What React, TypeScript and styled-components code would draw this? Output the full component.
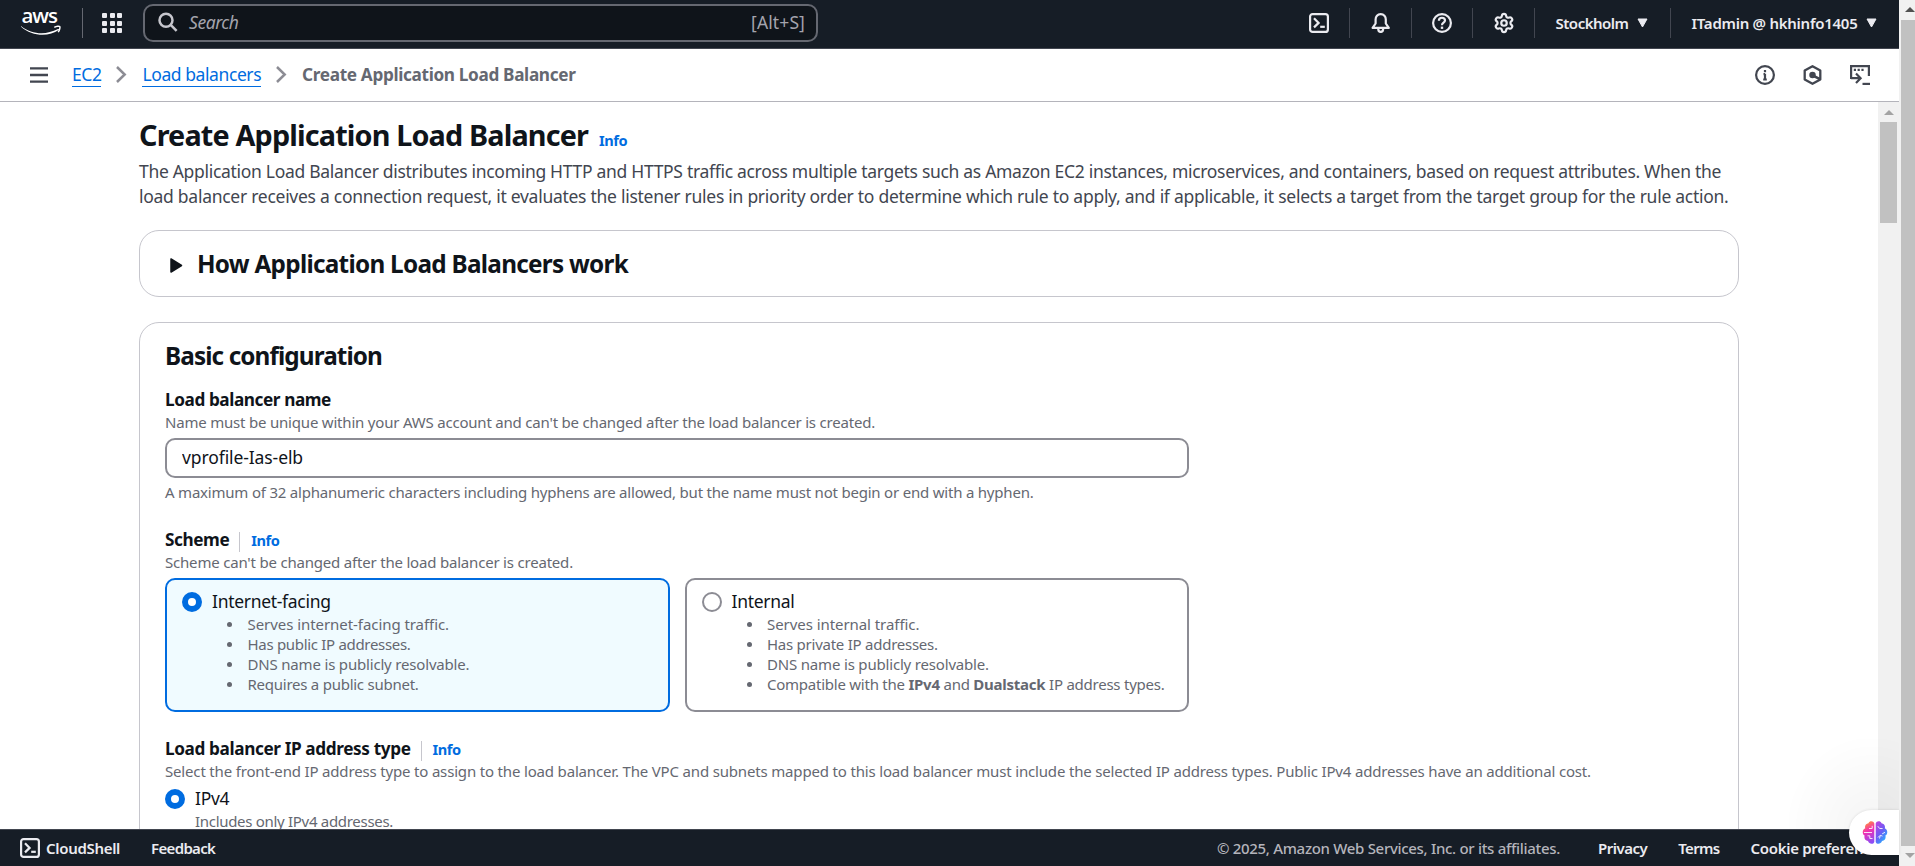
import React from "react";
import styled, { createGlobalStyle, css } from "styled-components";
import { Settings } from "lucide-react";

const GlobalStyle = createGlobalStyle`
  * { box-sizing: border-box; }
  body {
    margin: 0;
    overflow: hidden;
    background: #fff;
    color: #0f141a;
    font-family: "Noto Sans", "Open Sans", sans-serif;
  }
`;

const Page = styled.div`
  display: flex;
  width: 100vw;
  height: 100vh;
  min-height: 0;
`;

const Console = styled.div`
  display: flex;
  flex: 1;
  flex-direction: column;
  min-width: 0;
`;

/* ---------- top navigation ---------- */

const TopBar = styled.header`
  display: flex;
  flex: none;
  height: 49px;
  background: #161d26;
  border-bottom: 1px solid #424650;
  color: #ebebf0;
  padding-left: 21px;
`;

const LogoLink = styled.div`
  width: 61px;
  height: 40px;
  padding-top: 5px;
`;

const BarDivider = styled.div`
  width: 1px;
  height: 30px;
  margin-top: 8px;
  background: #656871;
`;

const Apps = styled.div`
  display: grid;
  grid-template-columns: repeat(3, 5px);
  grid-auto-rows: 5px;
  gap: 2.5px;
  margin: 13px 21px 0 19px;
`;

const AppDot = styled.i`
  border-radius: 1px;
  background: #ebebf0;
`;

const SearchBox = styled.div`
  display: flex;
  align-items: center;
  width: 675px;
  height: 38px;
  margin-top: 4px;
  padding: 0 11px 2px 13px;
  border: 2px solid #656871;
  border-radius: 10px;
  background: #0f141a;
  color: #a4a4ad;
  font-size: 17.5px;
`;

const SearchHint = styled.span`
  flex: 1;
  margin-left: 11px;
  font-style: italic;
  letter-spacing: -0.45px;
`;

const Shortcut = styled.span`
  letter-spacing: 0.12px;
`;

const Utilities = styled.nav`
  display: flex;
  margin-left: auto;
`;

const Utility = styled.div<{ $width: number; $first?: boolean; $menu?: boolean }>`
  display: flex;
  align-items: center;
  justify-content: ${(p) => (p.$menu ? "flex-start" : "center")};
  gap: 8px;
  width: ${(p) => p.$width}px;
  height: 30px;
  margin-top: 8px;
  padding-left: ${(p) => (p.$menu ? 20.5 : 0)}px;
  border-left: 1px solid ${(p) => (p.$first ? "transparent" : "#424650")};
  font-size: 15px;
  font-weight: 600;
`;

const Tracked = styled.span<{ $tracking: number }>`
  letter-spacing: ${(p) => p.$tracking}px;
  white-space: nowrap;
`;

/* ---------- breadcrumbs ---------- */

const CrumbBar = styled.div`
  display: flex;
  flex: none;
  align-items: center;
  height: 53px;
  padding: 0 29px 1px 30px;
  border-bottom: 1px solid #b4b4bb;
  color: #424650;
`;

const Crumbs = styled.div`
  display: flex;
  flex: 1;
  align-items: center;
  gap: 15px;
  margin-left: 24px;
  font-size: 17.5px;
  line-height: 25px;
  white-space: nowrap;
`;

const CrumbLink = styled.a<{ $tracking: number }>`
  height: 24px;
  line-height: 24px;
  margin-top: -2px;
  box-shadow: 0 1px 0 #006ce0;
  color: #006ce0;
  letter-spacing: ${(p) => p.$tracking}px;
`;

const CurrentCrumb = styled.span`
  color: #656871;
  font-size: 17.2px;
  font-weight: 700;
  letter-spacing: -0.34px;
  margin-top: -1px;
`;

const CrumbTools = styled.div`
  display: flex;
  align-items: center;
  gap: 28px;
`;

/* ---------- scroll area ---------- */

const ScrollArea = styled.div`
  display: flex;
  flex: 1;
  min-height: 0;
  overflow: hidden;
`;

const Content = styled.main`
  flex: 1;
  min-width: 0;
  padding: 15px 139px 0;
  overflow: hidden;
`;

const InnerTrack = styled.div`
  display: flex;
  flex: none;
  flex-direction: column;
  align-items: center;
  width: 21px;
  padding-top: 8px;
  background: #f1f1f1;
`;

const InnerThumb = styled.div`
  width: 17px;
  height: 101px;
  margin-top: 7px;
  background: #c1c1c1;
`;

const OuterTrack = styled.div`
  display: flex;
  flex: none;
  flex-direction: column;
  justify-content: space-between;
  align-items: flex-end;
  width: 16px;
  padding: 7px 0 8px;
  background: #f1f1f1;
`;

const OuterThumb = styled.div`
  flex: 1;
  width: 14px;
  margin: 8px 0 7px;
  background: #c1c1c1;
`;

const ScrollArrow = styled.div<{ $down?: boolean; $color: string }>`
  width: 0;
  height: 0;
  border: solid transparent;
  border-width: 0 5px;
  ${(p) =>
    p.$down
      ? css`border-top: 5px solid ${p.$color};`
      : css`border-bottom: 5px solid ${p.$color};`}
`;

/* ---------- form ---------- */

const TitleRow = styled.div`
  display: flex;
  align-items: baseline;
  gap: 11px;
  height: 36px;
`;

const PageTitle = styled.h1`
  margin: 0;
  font-size: 28.8px;
  font-weight: 700;
  line-height: 36px;
  letter-spacing: -0.85px;
`;

const InfoLink = styled.a`
  color: #006ce0;
  font-size: 14.6px;
  font-weight: 700;
  letter-spacing: -0.45px;
`;

const Intro = styled.p`
  margin: 6px 0 21px;
  color: #424650;
  font-size: 17.5px;
  line-height: 25px;
`;

const IntroLine = styled.span<{ $tracking: number }>`
  display: block;
  letter-spacing: ${(p) => p.$tracking}px;
  white-space: nowrap;
`;

const Card = styled.section`
  border: 1px solid #c6c6cd;
  border-radius: 20px;
  background: #fff;
`;

const HelpCard = styled(Card)`
  display: flex;
  align-items: center;
  gap: 14px;
  height: 67px;
  margin-bottom: 25px;
  padding-left: 30px;
`;

const FormCard = styled(Card)`
  height: 900px;
  padding: 18px 25px;
`;

const Heading = styled.h2<{ $tracking: number }>`
  margin: 0;
  font-size: 24.3px;
  font-weight: 700;
  line-height: 30px;
  letter-spacing: ${(p) => p.$tracking}px;
`;

const Field = styled.div<{ $gap: number }>`
  margin-top: ${(p) => p.$gap}px;
`;

const LabelRow = styled.div`
  display: flex;
  align-items: center;
  height: 25px;
`;

const Label = styled.span<{ $tracking: number }>`
  font-size: 17.2px;
  font-weight: 700;
  line-height: 25px;
  letter-spacing: ${(p) => p.$tracking}px;
`;

const LabelDivider = styled.i`
  width: 1px;
  height: 20px;
  margin: 4px 11px 0 10px;
  background: #c6c6cd;
`;

const Description = styled.div<{ $tracking: number; $top?: number }>`
  margin-top: ${(p) => p.$top ?? 0}px;
  color: #656871;
  font-size: 15px;
  line-height: 20px;
  letter-spacing: ${(p) => p.$tracking}px;
  white-space: nowrap;
`;

const TextInput = styled.input`
  display: block;
  width: 1024px;
  height: 40px;
  margin: 6px 0 4px;
  padding: 0 15px 3px;
  border: 2px solid #8c8c94;
  border-radius: 10px;
  background: #fff;
  color: #0f141a;
  font: 400 17.5px "Noto Sans", sans-serif;
  letter-spacing: -0.1px;
  outline: none;
`;

const Tiles = styled.div`
  display: grid;
  grid-template-columns: repeat(2, minmax(0, 1fr));
  gap: 15px;
  width: 1024px;
  margin-top: 6px;
`;

const Tile = styled.div<{ $selected?: boolean }>`
  display: flex;
  gap: 10px;
  height: 134px;
  padding: 9px 15px;
  border: 2px solid ${(p) => (p.$selected ? "#006ce0" : "#8c8c94")};
  border-radius: 10px;
  background: ${(p) => (p.$selected ? "#f0fbff" : "#fff")};
`;

const Radio = styled.span<{ $selected?: boolean }>`
  flex: none;
  width: 20px;
  height: 20px;
  margin-top: 3px;
  border: ${(p) => (p.$selected ? "6px solid #006ce0" : "2px solid #8c8c94")};
  border-radius: 50%;
  background: #fff;
`;

const OptionLabel = styled.div`
  font-size: 17.5px;
  line-height: 25px;
  letter-spacing: -0.3px;
`;

const Bullets = styled.ul`
  display: flex;
  flex-direction: column;
  margin: 0;
  padding: 0 0 0 15px;
  list-style: none;
`;

const Bullet = styled.li<{ $tracking: number }>`
  display: flex;
  align-items: center;
  height: 20px;
  color: #656871;
  font-size: 15px;
  line-height: 20px;
  letter-spacing: ${(p) => p.$tracking}px;
  white-space: pre;

  &::before {
    content: "";
    width: 5px;
    height: 5px;
    margin-right: 15.5px;
    border-radius: 50%;
    background: #656871;
  }

  b { font-weight: 700; }
`;

const RadioRow = styled.div`
  display: flex;
  gap: 10px;
  margin-top: 5px;
`;

/* ---------- footer ---------- */

const Footer = styled.footer`
  display: flex;
  flex: none;
  align-items: center;
  height: 37px;
  padding: 0 0 0 20px;
  border-top: 1px solid #424650;
  background: #161d26;
  color: #ebebf0;
  font-size: 15px;
  font-weight: 600;
  overflow: hidden;
`;

const FooterItem = styled.span<{ $left: number; $tracking: number; $muted?: boolean }>`
  margin-left: ${(p) => p.$left}px;
  color: ${(p) => (p.$muted ? "#b4b4bb" : "inherit")};
  font-weight: ${(p) => (p.$muted ? 500 : 600)};
  letter-spacing: ${(p) => p.$tracking}px;
  white-space: nowrap;
`;

const FooterRight = styled.div`
  display: flex;
  flex: none;
  width: 682px;
  margin-left: auto;
`;

const Assistant = styled.div`
  position: fixed;
  right: 16px;
  bottom: 11px;
  display: flex;
  align-items: center;
  width: 50px;
  height: 45px;
  padding-left: 13px;
  border-radius: 23px 0 0 23px;
  background: #fff;
  box-shadow: 0 0 3px rgba(0, 0, 0, 0.12);
`;

const AssistantGlow = styled.div`
  position: fixed;
  right: 16px;
  bottom: 37px;
  width: 110px;
  height: 90px;
  background: radial-gradient(ellipse at 75% 100%, rgba(0, 0, 0, 0.045), transparent 75%);
  pointer-events: none;
`;

/* ---------- icons ---------- */

const AwsLogo = () => (
  <svg width="40" height="31" viewBox="0 0 40 31" overflow="visible">
    <text x="0.5" y="18" fill="#fff" fontFamily="Open Sans" fontSize="20.500" fontWeight="600" textLength="36.500">
      aws
    </text>
    <path d="M.3 21.2C10.500 29.300 24.500 30.600 37 24.100c.8-.4 1.300.4.7 1C28 32 11 31.800.1 21.800c-.3-.4-.1-.8.2-.6Z" fill="#fff" />
    <path d="M33.300 22.400c2.300-1.500 5-1.400 5.500-.8.4.6-.1 3.600-1.600 5.500" fill="none" stroke="#fff" strokeWidth="1.500" />
  </svg>
);

const TerminalIcon = () => (
  <svg width="20" height="20" viewBox="0 0 20 20" fill="none" stroke="currentColor" strokeWidth="2.200">
    <rect x="1.100" y="1.100" width="17.800" height="17.800" rx="2.500" />
    <path d="m5 5.300 4.600 4.600L5 14.400" />
    <path d="M11.200 13.800h4.600" />
  </svg>
);

const SearchIcon = () => (
  <svg width="20" height="20" viewBox="0 0 20 20" fill="none" stroke="#c6c6cd" strokeWidth="2.500">
    <circle cx="8" cy="8.200" r="6.500" />
    <path d="m12.700 12.900 5.900 6" />
  </svg>
);

const BellIcon = () => (
  <svg width="20" height="20" viewBox="0 0 20 20" fill="none" stroke="currentColor" strokeWidth="2.200" strokeLinejoin="round">
    <path d="M9.700 1.100c-3.200 0-5.100 2.400-5.100 5.400v4L1.600 14.900h16.200l-3-4.400v-4c0-3-1.900-5.400-5.100-5.400Z" />
    <path d="M7.200 15.500c0 4.600 5 4.600 5 0" />
  </svg>
);

const HelpIcon = () => (
  <svg width="20" height="20" viewBox="0 0 20 20" fill="none" stroke="currentColor" strokeWidth="2.200">
    <circle cx="10" cy="10" r="8.900" />
    <path d="M6.900 7.700C6.900 3.700 13 3.900 13 7.500c0 2.300-3 2.100-3 4.700" />
    <path d="M10 13.600v2.300" strokeWidth="2.400" />
  </svg>
);

const CaretDown = () => (
  <svg width="11" height="10" viewBox="0 0 11 10" fill="currentColor" stroke="currentColor" strokeLinejoin="round">
    <path d="M1 1h9L5.500 9Z" />
  </svg>
);

const CaretSvg = styled.svg`
  margin-top: 4px;
`;

const CaretRight = () => (
  <CaretSvg width="13" height="15" viewBox="0 0 13 15" fill="currentColor" stroke="currentColor" strokeWidth="1.500" strokeLinejoin="round">
    <path d="M1 1v13l10.500-6.500Z" />
  </CaretSvg>
);

const MenuIcon = () => (
  <svg width="18" height="16" viewBox="0 0 18 16" stroke="currentColor" strokeWidth="2.300">
    <path d="M0 1.300h18M0 8h18M0 14.700h18" />
  </svg>
);

const Chevron = () => (
  <svg width="11" height="17" viewBox="0 0 11 17" fill="none" stroke="#8c8c94" strokeWidth="2.500">
    <path d="m1 1 7.700 7.500L1 16" />
  </svg>
);

const InfoIcon = () => (
  <svg width="20" height="20" viewBox="0 0 20 20" fill="none" stroke="currentColor" strokeWidth="2.200">
    <circle cx="10" cy="10" r="8.900" />
    <path d="M10 8.700v6.300M10 5v2.200M8.500 9.200H10M8.200 14.500h3.600" />
  </svg>
);

const HexagonIcon = () => (
  <svg width="19" height="20" viewBox="0 0 19 20" fill="none" stroke="currentColor" strokeWidth="2.300" strokeLinejoin="round">
    <path d="M9.500 1.200 17.300 5.600v8.800l-7.800 4.400-7.800-4.400V5.600Z" />
    <circle cx="9.500" cy="10" r="2.100" fill="currentColor" />
    <path d="m10.500 10.800 6.500 3.400" strokeWidth="2.600" />
  </svg>
);

const ShellWindowIcon = () => (
  <svg width="20" height="20" viewBox="0 0 20 20" fill="none" stroke="currentColor" strokeWidth="2.200">
    <path d="M1.100 14V1.100h17.800V11" />
    <path d="M3.800 4.900h2.200M7.600 4.900h2.200M11.400 4.900h2.200" />
    <path d="M1 13.200h9M6 8.500l4.600 4.700L6 18" />
    <path d="M12.500 18.900H20" />
  </svg>
);

const BrainIcon = () => (
  <svg width="26" height="26" viewBox="0 0 26 26">
    <defs>
      <linearGradient id="brainLeft" x1="0.300" y1="0" x2="0.600" y2="1">
        <stop offset="0" stopColor="#ff9a2e" />
        <stop offset="0.420" stopColor="#f42fb0" />
        <stop offset="1" stopColor="#8b4df5" />
      </linearGradient>
      <linearGradient id="brainRight" x1="0" y1="0" x2="0.700" y2="1">
        <stop offset="0" stopColor="#c43fe0" />
        <stop offset="0.550" stopColor="#6a5cf5" />
        <stop offset="1" stopColor="#22b8ff" />
      </linearGradient>
    </defs>
    <path d="M12.300 3.500C11.500.7 7.500.6 6.500 3.300 3.800 3.500 2.500 6 3.200 8.300.3 9.500-.2 14 2.600 15.600c-.8 2.700.6 5.200 3.400 5.500 1.200 3.600 5.500 3.500 6.300.8Z" fill="url(#brainLeft)" />
    <path d="M13.700 3.500c.8-2.800 4.800-2.900 5.800-.2 2.700.2 4 2.700 3.300 5 2.900 1.200 3.400 5.700.6 7.300.8 2.700-.6 5.200-3.400 5.500-1.200 3.600-5.500 3.500-6.300.8Z" fill="url(#brainRight)" />
    <g fill="none" stroke="#fff" strokeWidth="1" opacity="0.850">
      <path d="M7 8.500h3.200V5.800M2 12.500h8M10.500 18.500H7.800v-2.700H5.500" />
      <path d="m15.800 6.200 1.800 2.300h3M23 12.300l-2.800 1.500M16 17.500l2.200-2.200 2.300.8M17.500 18.500l.8-3" />
    </g>
  </svg>
);

interface Point {
  text: React.ReactNode;
  tracking: number;
}

const schemes: { label: string; selected: boolean; points: Point[] }[] = [
  {
    label: "Internet-facing",
    selected: true,
    points: [
      { text: "Serves internet-facing traffic.", tracking: -0.06 },
      { text: "Has public IP addresses.", tracking: -0.31 },
      { text: "DNS name is publicly resolvable.", tracking: -0.18 },
      { text: "Requires a public subnet.", tracking: -0.25 },
    ],
  },
  {
    label: "Internal",
    selected: false,
    points: [
      { text: "Serves internal traffic.", tracking: -0.06 },
      { text: "Has private IP addresses.", tracking: -0.25 },
      { text: "DNS name is publicly resolvable.", tracking: -0.18 },
      {
        text: (
          <span>
            Compatible with the <b>IPv4</b> and <b>Dualstack</b> IP address types.
          </span>
        ),
        tracking: -0.24,
      },
    ],
  },
];

export default function App() {
  return (
    <>
      <GlobalStyle />
      <Page>
        <Console>
          <TopBar>
            <LogoLink><AwsLogo /></LogoLink>
            <BarDivider />
            <Apps>
              {Array.from({ length: 9 }, (_, i) => <AppDot key={i} />)}
            </Apps>
            <SearchBox>
              <SearchIcon />
              <SearchHint>Search</SearchHint>
              <Shortcut>[Alt+S]</Shortcut>
            </SearchBox>
            <Utilities>
              <Utility $width={61} $first><TerminalIcon /></Utility>
              <Utility $width={62}><BellIcon /></Utility>
              <Utility $width={61}><HelpIcon /></Utility>
              <Utility $width={62}><Settings size={22} strokeWidth={2.4} /></Utility>
              <Utility $width={136} $menu>
                <Tracked $tracking={-0.49}>Stockholm</Tracked>
                <CaretDown />
              </Utility>
              <Utility $width={229} $menu>
                <Tracked $tracking={-0.26}>ITadmin @ hkhinfo1405</Tracked>
                <CaretDown />
              </Utility>
            </Utilities>
          </TopBar>

          <CrumbBar>
            <MenuIcon />
            <Crumbs>
              <CrumbLink $tracking={-0.44}>EC2</CrumbLink>
              <Chevron />
              <CrumbLink $tracking={-0.42}>Load balancers</CrumbLink>
              <Chevron />
              <CurrentCrumb>Create Application Load Balancer</CurrentCrumb>
            </Crumbs>
            <CrumbTools>
              <InfoIcon />
              <HexagonIcon />
              <ShellWindowIcon />
            </CrumbTools>
          </CrumbBar>

          <ScrollArea>
            <Content>
              <TitleRow>
                <PageTitle>Create Application Load Balancer</PageTitle>
                <InfoLink>Info</InfoLink>
              </TitleRow>
              <Intro>
                <IntroLine $tracking={-0.306}>
                  The Application Load Balancer distributes incoming HTTP and HTTPS traffic across multiple targets such as Amazon EC2 instances, microservices, and containers, based on request attributes. When the
                </IntroLine>
                <IntroLine $tracking={-0.272}>
                  load balancer receives a connection request, it evaluates the listener rules in priority order to determine which rule to apply, and if applicable, it selects a target from the target group for the rule action.
                </IntroLine>
              </Intro>

              <HelpCard>
                <CaretRight />
                <Heading $tracking={-0.72}>How Application Load Balancers work</Heading>
              </HelpCard>

              <FormCard>
                <Heading $tracking={-0.9}>Basic configuration</Heading>

                <Field $gap={16}>
                  <LabelRow><Label $tracking={-0.42}>Load balancer name</Label></LabelRow>
                  <Description $tracking={-0.2}>
                    Name must be unique within your AWS account and can't be changed after the load balancer is created.
                  </Description>
                  <TextInput defaultValue="vprofile-Ias-elb" />
                  <Description $tracking={-0.207}>
                    A maximum of 32 alphanumeric characters including hyphens are allowed, but the name must not begin or end with a hyphen.
                  </Description>
                </Field>

                <Field $gap={25}>
                  <LabelRow>
                    <Label $tracking={-0.42}>Scheme</Label>
                    <LabelDivider />
                    <InfoLink>Info</InfoLink>
                  </LabelRow>
                  <Description $tracking={-0.197}>Scheme can't be changed after the load balancer is created.</Description>
                  <Tiles>
                    {schemes.map((s) => (
                      <Tile key={s.label} $selected={s.selected}>
                        <Radio $selected={s.selected} />
                        <div>
                          <OptionLabel>{s.label}</OptionLabel>
                          <Bullets>
                            {s.points.map((p, i) => <Bullet key={i} $tracking={p.tracking}>{p.text}</Bullet>)}
                          </Bullets>
                        </div>
                      </Tile>
                    ))}
                  </Tiles>
                </Field>

                <Field $gap={24}>
                  <LabelRow>
                    <Label $tracking={-0.38}>Load balancer IP address type</Label>
                    <LabelDivider />
                    <InfoLink>Info</InfoLink>
                  </LabelRow>
                  <Description $tracking={-0.17}>
                    Select the front-end IP address type to assign to the load balancer. The VPC and subnets mapped to this load balancer must include the selected IP address types. Public IPv4 addresses have an additional cost.
                  </Description>
                  <RadioRow>
                    <Radio $selected />
                    <div>
                      <OptionLabel>IPv4</OptionLabel>
                      <Description $tracking={-0.3}>Includes only IPv4 addresses.</Description>
                    </div>
                  </RadioRow>
                </Field>
              </FormCard>
            </Content>
            <InnerTrack>
              <ScrollArrow $color="#a3a3a3" />
              <InnerThumb />
            </InnerTrack>
          </ScrollArea>

          <Footer>
            <TerminalIcon />
            <FooterItem $left={6} $tracking={-0.31}>CloudShell</FooterItem>
            <FooterItem $left={31} $tracking={-0.66}>Feedback</FooterItem>
            <FooterRight>
              <FooterItem $left={0} $tracking={-0.311} $muted>© 2025, Amazon Web Services, Inc. or its affiliates.</FooterItem>
              <FooterItem $left={38} $tracking={-0.5}>Privacy</FooterItem>
              <FooterItem $left={31} $tracking={-0.65}>Terms</FooterItem>
              <FooterItem $left={31} $tracking={-0.3}>Cookie preferences</FooterItem>
            </FooterRight>
          </Footer>
        </Console>

        <OuterTrack>
          <ScrollArrow $color="#505050" />
          <OuterThumb />
          <ScrollArrow $down $color="#a3a3a3" />
        </OuterTrack>
      </Page>
      <AssistantGlow />
      <Assistant><BrainIcon /></Assistant>
    </>
  );
}
